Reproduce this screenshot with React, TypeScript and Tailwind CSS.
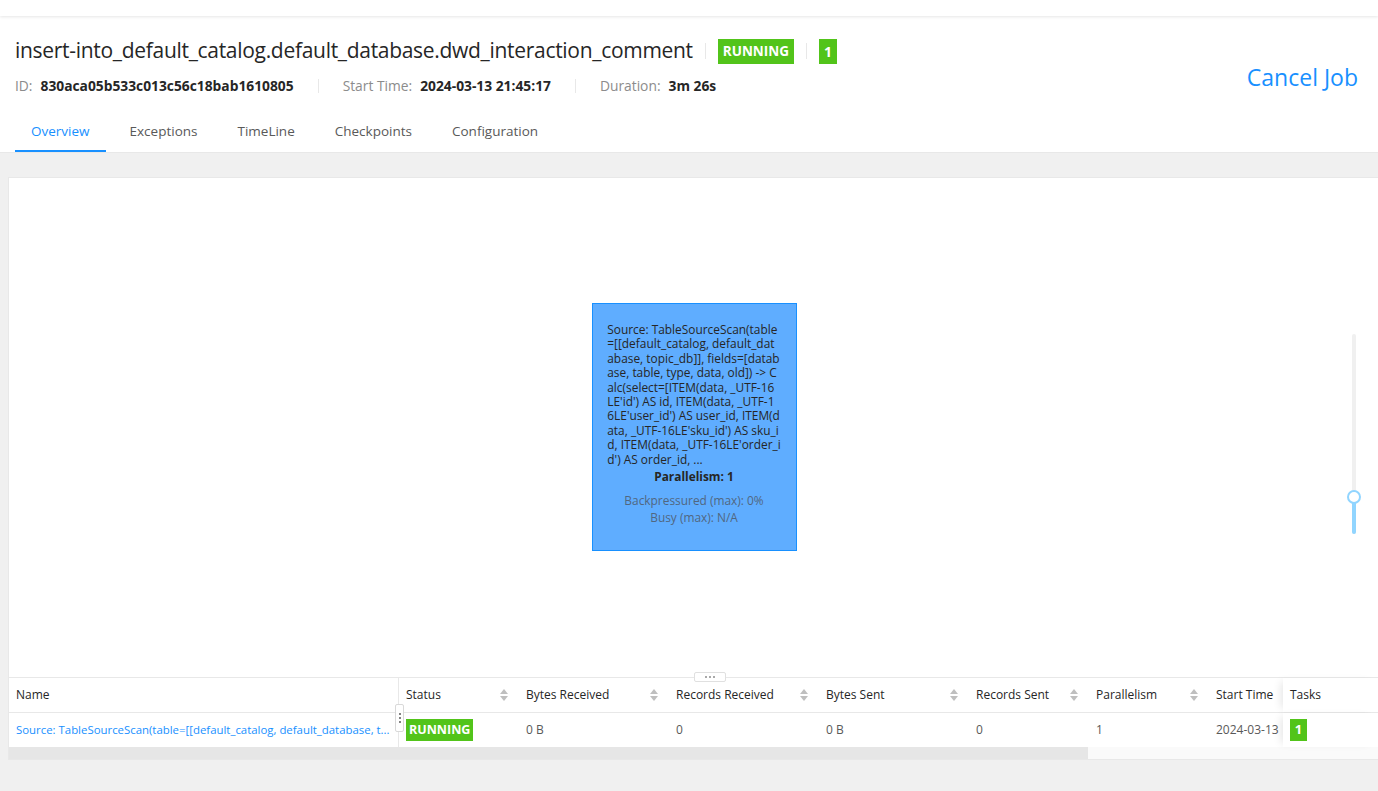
const font = { fontFamily: '"Open Sans", "Noto Sans", sans-serif' };

const nodeLines = [
  'Source: TableSourceScan(table',
  '=[[default_catalog, default_dat',
  'abase, topic_db]], fields=[datab',
  'ase, table, type, data, old]) -> C',
  "alc(select=[ITEM(data, _UTF-16",
  "LE'id') AS id, ITEM(data, _UTF-1",
  "6LE'user_id') AS user_id, ITEM(d",
  "ata, _UTF-16LE'sku_id') AS sku_i",
  "d, ITEM(data, _UTF-16LE'order_i",
  "d') AS order_id, ...",
];

const columns = [
  { name: 'Status', w: 'w-[120px]' },
  { name: 'Bytes Received', w: 'w-[150px]' },
  { name: 'Records Received', w: 'w-[150px]' },
  { name: 'Bytes Sent', w: 'w-[150px]' },
  { name: 'Records Sent', w: 'w-[120px]' },
  { name: 'Parallelism', w: 'w-[120px]' },
];

const tabs = ['Overview', 'Exceptions', 'TimeLine', 'Checkpoints', 'Configuration'];

function Caret() {
  return (
    <span className="flex flex-col gap-[2px]">
      <svg width="8" height="5" viewBox="0 0 8 5"><path d="M4 0 L8 5 L0 5 Z" fill="#bfbfbf" /></svg>
      <svg width="8" height="5" viewBox="0 0 8 5"><path d="M0 0 L8 0 L4 5 Z" fill="#bfbfbf" /></svg>
    </span>
  );
}

export default function App() {
  return (
    <div className="w-[1378px] h-[791px] bg-[#f0f0f0] overflow-hidden" style={font}>
      <div className="h-[16px] bg-white shadow-[0_1px_3px_rgba(0,0,0,0.1)] relative z-10" />
      <div className="bg-white border-b border-[#e8e8e8] px-[15px] pt-[18px] flex flex-col">
        <div className="flex items-start justify-between">
          <div className="flex flex-col">
            <div className="flex items-center h-[34px]">
              <h1 className="text-[21px] text-[#262626] tracking-[-0.3px]">insert-into_default_catalog.default_database.dwd_interaction_comment</h1>
              <span className="w-px h-[16px] bg-[#e8e8e8] mx-[12px]" />
              <span className="bg-[#52c41a] text-white font-bold text-[13.5px] h-[25px] px-[5px] flex items-center">RUNNING</span>
              <span className="w-px h-[16px] bg-[#e8e8e8] mx-[12px]" />
              <span className="bg-[#52c41a] text-white font-bold text-[14px] h-[25px] w-[18px] flex items-center justify-center">1</span>
            </div>
            <div className="flex items-center h-[20px] mt-[8px] text-[13.8px]">
              <span className="text-[#8c8c8c]">ID:</span>
              <span className="ml-[8px] font-bold text-[#262626]">830aca05b533c013c56c18bab1610805</span>
              <span className="w-px h-[14px] bg-[#e8e8e8] mx-[24px]" />
              <span className="text-[#8c8c8c]">Start Time:</span>
              <span className="ml-[8px] font-bold text-[#262626]">2024-03-13 21:45:17</span>
              <span className="w-px h-[14px] bg-[#e8e8e8] mx-[24px]" />
              <span className="text-[#8c8c8c]">Duration:</span>
              <span className="ml-[8px] font-bold text-[#262626]">3m 26s</span>
            </div>
          </div>
          <button className="text-[#1890ff] text-[23px] mt-[26px] mr-[5px]">Cancel Job</button>
        </div>
        <div className="flex gap-[8px] mt-[17px] text-[13.5px] text-[#595959]">
          {tabs.map((t, i) => (
            <div
              key={t}
              className={
                i === 0
                  ? 'px-[16px] h-[39px] flex items-center text-[#1890ff] border-b-2 border-[#1890ff]'
                  : 'px-[16px] h-[39px] flex items-center border-b-2 border-transparent'
              }
            >
              {t}
            </div>
          ))}
        </div>
      </div>

      <div className="ml-[8px] mt-[24px] bg-white border-l border-t border-[#e8e8e8]">
        <div className="h-[499px] relative flex items-start justify-center">
          <div className="mt-[125px] ml-[1px] w-[205px] h-[248px] bg-[#5fadff] border border-[#1890ff] px-[12px] pt-[18px] text-[11.9px] leading-[14.4px] text-[#262626] flex flex-col items-center">
            <div className="flex flex-col items-start whitespace-nowrap">
              {nodeLines.map((l) => (
                <div key={l}>{l}</div>
              ))}
            </div>
            <div className="font-bold mt-[3px]">Parallelism: 1</div>
            <div className="mt-[9px] text-[#51677f] leading-[17px]">Backpressured (max): 0%</div>
            <div className="text-[#51677f] leading-[17px]">Busy (max): N/A</div>
          </div>
          <div className="absolute left-[1343px] top-[156px] w-[4px] h-[200px] bg-[#f0f0f0] rounded">
            <div className="absolute bottom-0 left-0 w-[4px] h-[37px] bg-[#91d5ff] rounded" />
            <div className="absolute left-[-5px] top-[156px] w-[14px] h-[14px] rounded-full bg-white border-2 border-[#91d5ff]" />
          </div>
          <div className="absolute left-[685px] bottom-[-5px] w-[32px] h-[10px] bg-white border border-[#e0e0e0] rounded-[2px] flex items-center justify-center gap-[2px] z-10">
            <span className="w-[2px] h-[2px] bg-[#8c8c8c] rounded-full" />
            <span className="w-[2px] h-[2px] bg-[#8c8c8c] rounded-full" />
            <span className="w-[2px] h-[2px] bg-[#8c8c8c] rounded-full" />
          </div>
        </div>

        <div className="border-t border-[#e8e8e8] text-[12px]">
          <div className="flex h-[35px] items-center border-b border-[#e8e8e8] text-[#262626]">
            <div className="w-[390px] h-full flex items-center px-[7px] border-r border-[#e8e8e8]">Name</div>
            {columns.map((c) => (
              <div key={c.name} className={`${c.w} h-full flex items-center justify-between px-[7px] pr-[11px]`}>
                <span>{c.name}</span>
                <Caret />
              </div>
            ))}
            <div className="w-[74px] h-full flex items-center px-[7px] whitespace-nowrap overflow-hidden">Start Time</div>
            <div className="flex-1 h-full flex items-center px-[7px] bg-white shadow-[-6px_0_8px_-4px_rgba(0,0,0,0.1)]">Tasks</div>
          </div>
          <div className="flex h-[34px] items-center text-[#595959] relative">
            <div className="w-[390px] h-full flex items-center px-[7px] border-r border-[#e8e8e8] text-[#1890ff] text-[11.4px] whitespace-nowrap">
              Source: TableSourceScan(table=[[default_catalog, default_database, t...
            </div>
            <div className="absolute left-[386px] top-[-9px] w-[9px] h-[28px] bg-white border border-[#d9d9d9] rounded-[2px] flex flex-col items-center justify-center gap-[2px]">
              <span className="w-[2px] h-[2px] bg-[#595959] rounded-full" />
              <span className="w-[2px] h-[2px] bg-[#595959] rounded-full" />
              <span className="w-[2px] h-[2px] bg-[#595959] rounded-full" />
            </div>
            <div className="w-[120px] h-full flex items-center px-[7px]">
              <span className="bg-[#52c41a] text-white font-bold text-[12.5px] h-[22px] px-[3px] flex items-center">RUNNING</span>
            </div>
            <div className="w-[150px] px-[7px]">0 B</div>
            <div className="w-[150px] px-[7px]">0</div>
            <div className="w-[150px] px-[7px]">0 B</div>
            <div className="w-[120px] px-[7px]">0</div>
            <div className="w-[120px] px-[7px]">1</div>
            <div className="w-[74px] pl-[7px] whitespace-nowrap">2024-03-13</div>
            <div className="flex-1 h-full flex items-center px-[7px] bg-white shadow-[-6px_0_8px_-4px_rgba(0,0,0,0.1)]">
              <span className="bg-[#52c41a] text-white font-bold text-[13px] h-[22px] w-[17px] flex items-center justify-center">1</span>
            </div>
          </div>
          <div className="h-[13px] bg-[#fafafa] border-b border-[#e8e8e8] flex">
            <div className="w-[1079px] h-full bg-[#e6e6e6]" />
          </div>
        </div>
      </div>
    </div>
  );
}
